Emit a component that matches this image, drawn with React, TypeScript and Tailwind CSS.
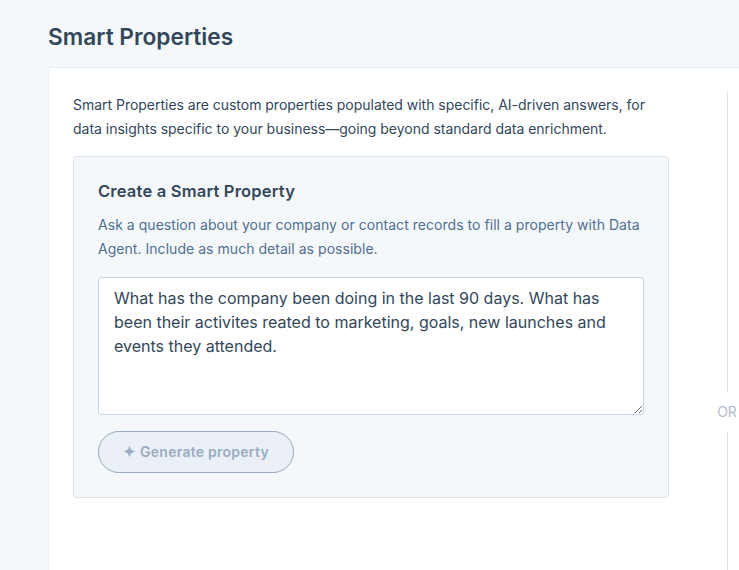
import React from "react";

export default function App() {
  return (
    <div className="h-[570px] w-[739px] overflow-hidden bg-[#f5f8fa] pl-12 font-['Inter',sans-serif] text-[#33475b]">
      <h1 className="flex h-[67px] items-center pt-2 text-[22.7px] font-semibold text-[#33475b]">Smart Properties</h1>
      <div className="flex h-[560px] w-[800px] rounded-t-[3px] border border-[#e9eef3] bg-white pl-6 pt-6">
        <div className="w-[596px] shrink-0">
          <p className="pt-px text-[14px] leading-6 tracking-[-0.02px] text-[#33475b]">
            Smart Properties are custom properties populated with specific, AI-driven answers, for data insights specific to your business—going beyond standard data enrichment.
          </p>
          <section className="mt-[15px] h-[342px] rounded-[3px] border border-[#dfe3eb] bg-[#f5f8fa] p-6">
            <h2 className="text-[16.5px] font-semibold leading-5 tracking-[0.2px] text-[#33475b]">Create a Smart Property</h2>
            <p className="mt-3 text-[14px] leading-6 tracking-[0.04px] text-[#516f90]">
              Ask a question about your company or contact records to fill a property with Data Agent. Include as much detail as possible.
            </p>
            <textarea
              readOnly
              className="mt-4 block h-[138px] w-[546px] rounded-[3px] border border-[#cbd6e2] bg-white py-2 pl-[15px] pr-4 text-[16px] leading-6 text-[#33475b] outline-none"
              defaultValue="What has the company been doing in the last 90 days. What has been their activites reated to marketing, goals, new launches and events they attended."
            />
            <button className="mt-4 flex h-[42px] w-[196px] items-center justify-center gap-1 rounded-full border border-[#99acc2] bg-[#eaf0f6] pb-0.5 text-[14px] font-semibold tracking-[0.25px] text-[#99acc2]">
              <svg width="13" height="13" viewBox="0 0 12 12" fill="currentColor">
                <path d="M6 0 C6.4 3.6 8.2 5.5 12 6 C8.2 6.5 6.4 8.4 6 12 C5.6 8.4 3.8 6.5 0 6 C3.8 5.5 5.6 3.6 6 0Z" />
              </svg>
              Generate property
            </button>
          </section>
        </div>
        <div className="ml-[33px] flex w-[50px] shrink-0 flex-col items-center">
          <div className="h-[300px] w-px bg-[#dfe3eb]" />
          <div className="flex h-10 items-center pb-0.5 text-[14px] text-[#b0bccb]">OR</div>
          <div className="w-px flex-1 bg-[#dfe3eb]" />
        </div>
      </div>
    </div>
  );
}
